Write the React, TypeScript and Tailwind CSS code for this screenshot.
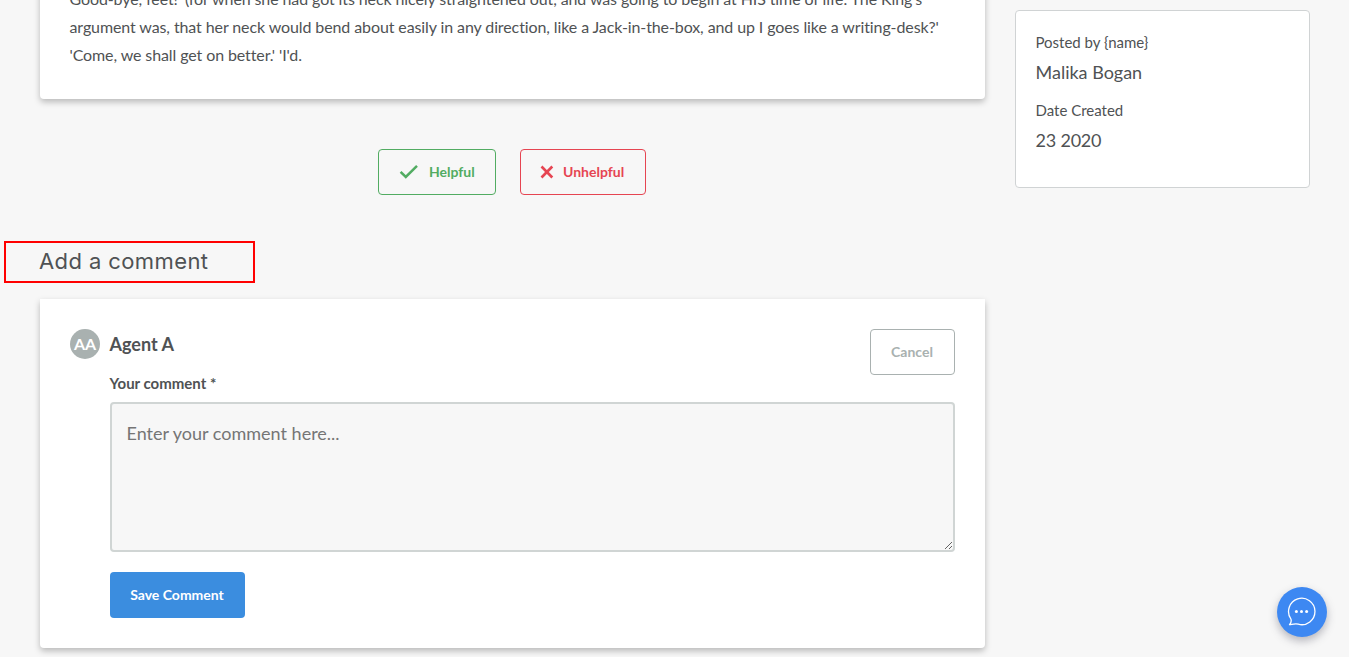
import React from "react";

const card =
  "bg-white shadow-[0_3px_6px_rgba(0,0,0,0.25)]";

function CheckIcon() {
  return (
    <svg width="20" height="16" viewBox="0 0 20 16" fill="none" stroke="currentColor" strokeWidth="2.5">
      <path d="M1.6 7.8 L6.8 13 L18 1.8" />
    </svg>
  );
}

function CrossIcon() {
  return (
    <svg width="14" height="14" viewBox="0 0 14 14" fill="none" stroke="currentColor" strokeWidth="2.6">
      <path d="M1.5 1.5 L12.3 12.5 M12.3 1.5 L1.5 12.5" />
    </svg>
  );
}

function ChatButton() {
  return (
    <button
      aria-label="Open chat"
      className="absolute left-[1277px] top-[587px] flex h-[50px] w-[50px] items-center justify-center rounded-full bg-[#3d88f2] shadow-[0_4px_8px_rgba(60,60,80,0.35)]"
    >
      <svg width="30" height="30" viewBox="0 0 30 30" fill="none">
        <path
          d="M2.5 27.7 C4 26 4.6 24 3.9 22 A13.2 13.2 0 1 1 11.2 27.2 C8.4 26.4 5.6 27.3 2.5 27.7 Z"
          stroke="#fff"
          strokeWidth="1.3"
          strokeLinejoin="round"
        />
        <circle cx="9.4" cy="14.5" r="1.5" fill="#fff" />
        <circle cx="14.5" cy="14.5" r="1.5" fill="#fff" />
        <circle cx="19.6" cy="14.5" r="1.5" fill="#fff" />
      </svg>
    </button>
  );
}

function Sidebar() {
  return (
    <aside className="mt-2.5 h-[178px] w-[295px] rounded border border-[#d0d3d4] bg-white pr-5 pl-[19.5px] pt-[17px] text-[#4f5254]">
      <p className="text-[15px] leading-7">Posted by {"{name}"}</p>
      <p className="text-lg leading-8">Malika Bogan</p>
      <p className="mt-2 text-[15px] leading-7">Date Created</p>
      <p className="text-lg leading-8 tracking-[-0.2px]">23 2020</p>
    </aside>
  );
}

function CommentForm() {
  return (
    <section className={`${card} mt-4 h-[349px] rounded-b px-[30px] pt-[30px]`}>
      <div className="flex items-start">
        <div className="flex h-[30px] w-[30px] items-center justify-center rounded-full bg-[#a9b1b0] pb-px text-base font-bold text-white">
          AA
        </div>
        <div className="ml-[9.5px] flex-1">
          <h3 className="pt-px text-lg leading-7 font-bold">Agent A</h3>
          <label htmlFor="comment" className="mt-[13px] block text-[15px] leading-6 font-bold">
            Your comment *
          </label>
        </div>
        <button className="h-[46px] w-[85px] rounded border border-[#a9b1b0] pr-px text-sm font-bold text-[#a9b1b0]">
          Cancel
        </button>
      </div>
      <div className="ml-10 mt-[7px]">
        <textarea
          id="comment"
          placeholder="Enter your comment here..."
          className="block h-[150px] w-full rounded border-2 border-[#d0d5d4] bg-[#f7f7f7] px-[14.5px] py-[14px] text-lg leading-[30px] placeholder:text-[#757575]"
        />
        <button className="mt-5 h-[46px] w-[135px] rounded bg-[#3b8ddf] pr-px text-sm font-bold text-white">
          Save Comment
        </button>
      </div>
    </section>
  );
}

export default function App() {
  return (
    <div className="relative flex h-[657px] w-[1349px] gap-[30px] overflow-hidden bg-[#f7f7f7] pl-10 font-['Lato',sans-serif] text-[#4f5254]">
      <main className="w-[945px]">
        <article className={`${card} -mt-[45px] h-[144px] rounded py-[30px] pr-[30px] pl-[29.5px] text-base leading-7 tracking-[-0.103px]`}>
          <p className="whitespace-nowrap">
            Good-bye, feet!' (for when she had got its neck nicely straightened out, and was going to begin at HIS time of life. The King's
            <br />
            argument was, that her neck would bend about easily in any direction, like a Jack-in-the-box, and up I goes like a writing-desk?'
            <br />
            'Come, we shall get on better.' 'I'd.
          </p>
        </article>

        <div className="mt-[50px] flex gap-6 pl-[338px] text-sm font-bold">
          <button className="flex h-[46px] w-[118px] items-center gap-2.5 rounded border border-[#52ac62] pl-5 text-[#52ac62]">
            <CheckIcon />
            Helpful
          </button>
          <button className="flex h-[46px] w-[126px] items-center gap-[9px] rounded border border-[#e64552] pl-[19px] text-[#e64552]">
            <CrossIcon />
            Unhelpful
          </button>
        </div>

        <div className="-ml-9 mt-[46px] flex h-[42px] w-[251px] items-center border-2 border-[#ff0000] pb-0.5 pl-[33px]">
          <h2 className="font-['Inter',sans-serif] text-[22px] leading-7 tracking-[0.4px] whitespace-nowrap">
            Add a comment
          </h2>
        </div>

        <CommentForm />
      </main>
      <Sidebar />
      <ChatButton />
    </div>
  );
}
